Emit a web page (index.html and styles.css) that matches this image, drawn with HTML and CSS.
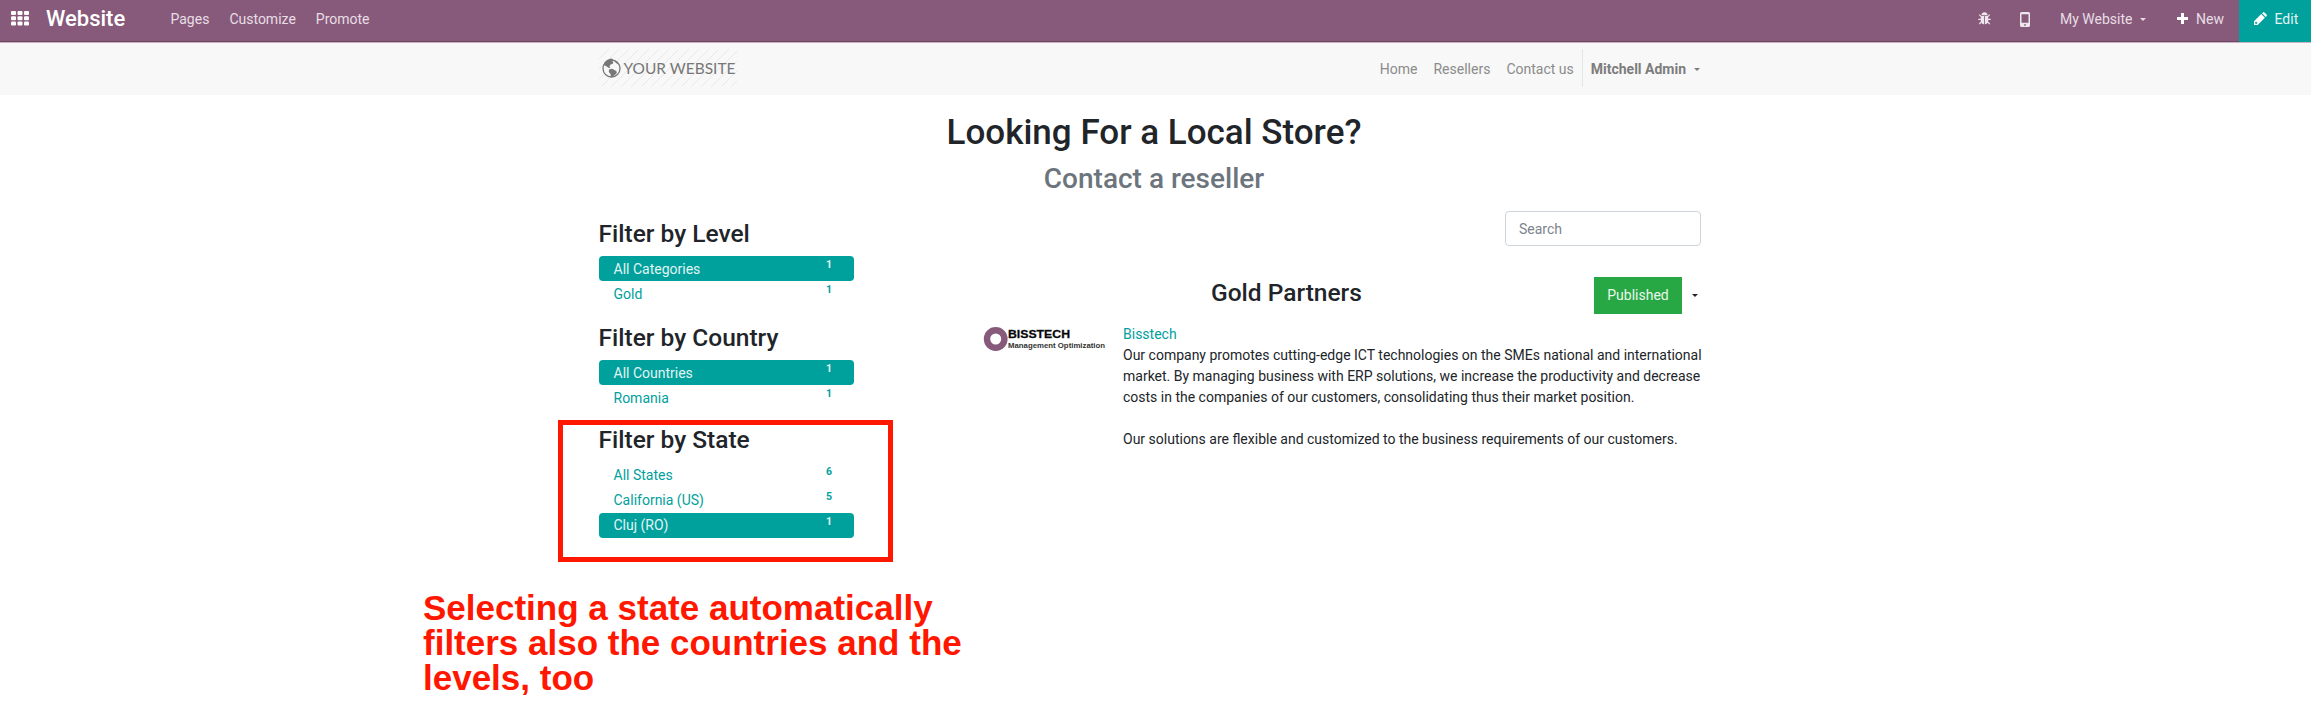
FILE: index.html
```html
<!DOCTYPE html>
<html lang="en">
<head>
<meta charset="utf-8">
<title>Resellers | My Website</title>
<link rel="stylesheet" href="styles.css">
</head>
<body>
<nav class="topbar">
  <svg class="apps" width="18" height="15" viewBox="0 0 18 15" fill="#fff"><rect x="0" y="0" width="5" height="4" rx="1"/><rect x="6.500" y="0" width="5" height="4" rx="1"/><rect x="13" y="0" width="5" height="4" rx="1"/><rect x="0" y="5.300" width="5" height="4" rx="1"/><rect x="6.500" y="5.300" width="5" height="4" rx="1"/><rect x="13" y="5.300" width="5" height="4" rx="1"/><rect x="0" y="10.600" width="5" height="4" rx="1"/><rect x="6.500" y="10.600" width="5" height="4" rx="1"/><rect x="13" y="10.600" width="5" height="4" rx="1"/></svg>
  <span class="brand">Website</span>
  <div class="menu"><a>Pages</a><a>Customize</a><a>Promote</a></div>
  <div class="tools">
    <svg class="bug" width="13" height="13" viewBox="0 0 13 13"><path d="M3.500 3.200a3 3 0 0 1 6 0z" fill="#eee6ec"/><path d="M2.800 3.900h3.300v8.400C4 12.300 2.800 10.500 2.800 8.500zM6.900 3.900h3.300v4.600C10.200 10.500 9 12.300 6.900 12.300z" fill="#eee6ec"/><path d="M1.300 2.700l2 2M11.700 2.700l-2 2M.3 7.300h3M12.700 7.300h-3M1.300 12l2.200-2.300M11.700 12l-2.200-2.300" stroke="#eee6ec" stroke-width="1.200"/></svg>
    <svg class="mobile" width="10" height="15" viewBox="0 0 10 15"><path fill-rule="evenodd" fill="#eee6ec" d="M1.500 0h7A1.500 1.500 0 0 1 10 1.500v12A1.500 1.500 0 0 1 8.500 15h-7A1.500 1.500 0 0 1 0 13.500v-12A1.500 1.500 0 0 1 1.500 0zM1.500 2.200v8.600h7V2.200zM5 12a.9.9 0 1 0 0 1.800.9.900 0 0 0 0-1.800z"/></svg>
    <a class="site">My Website<i class="caret"></i></a>
    <a class="new"><svg width="11" height="11" viewBox="0 0 11 11"><path d="M4 0h3v4h4v3H7v4H4V7H0V4h4z" fill="#fff"/></svg>New</a>
    <a class="edit"><svg width="13" height="13" viewBox="0 0 13 13"><path fill="#fff" fill-rule="evenodd" d="M0 13v-3.700L7.200 2.100l3.700 3.700L3.700 13zM1.200 10.200v1.600h1.600l.8-.8L2 9.400z"/><path fill="#fff" d="M8 1.300L9 .4q.7-.6 1.400 0l2.200 2.200q.6.700 0 1.400l-.9 1z"/></svg>Edit</a>
  </div>
</nav>
<header class="site-header">
  <svg class="logo" width="138" height="38" viewBox="0 0 138 38">
    <defs><pattern id="hatch" width="10" height="10" patternUnits="userSpaceOnUse"><path d="M-1 11L11-1M-1 1L1-1M9 11l2-2" stroke="#e9e9e9" stroke-width="1"/></pattern></defs>
    <rect width="138" height="38" fill="url(#hatch)"/>
    <circle cx="12.500" cy="19.500" r="8.500" fill="#f8f8f8" stroke="#777" stroke-width="1.300"/>
    <path fill="#777" d="M5 14l3-3 4-1.500 2 .5-1 2 1.500 1-1 2-2 .5-1 2 1 1.500-2-.2L7 17l-1.500-.5zM10 20.500l3-.7 3.500 1.700 1.500 1.500-1 2-2 1.500-1.500 1.500h-1.500l-.5-3-1.700-2zM15 11l3 2 1.500 2-1.800-.5L16 13z"/>
    <text x="24.500" y="25" textLength="112" lengthAdjust="spacingAndGlyphs" class="logo-text">YOUR WEBSITE</text>
  </svg>
  <div class="links"><a>Home</a><a>Resellers</a><a>Contact us</a><a class="user">Mitchell Admin<i class="caret"></i></a></div>
</header>
<main class="page">
  <h1>Looking For a Local Store?</h1>
  <h2>Contact a reseller</h2>
  <div class="columns">
    <aside class="filters">
      <h3>Filter by Level</h3>
      <ul><li class="active">All Categories<b>1</b></li><li>Gold<b>1</b></li></ul>
      <h3>Filter by Country</h3>
      <ul><li class="active">All Countries<b>1</b></li><li>Romania<b>1</b></li></ul>
      <section class="state">
        <h3>Filter by State</h3>
        <ul><li>All States<b>6</b></li><li>California (US)<b>5</b></li><li class="active">Cluj (RO)<b>1</b></li></ul>
        <div class="highlight"></div>
      </section>
    </aside>
    <section class="results">
      <input class="search" placeholder="Search">
      <div class="level"><h3>Gold Partners</h3><button>Published</button><i class="caret"></i></div>
      <article class="partner">
        <svg class="partner-logo" width="123" height="28" viewBox="0 0 123 28"><circle cx="11.700" cy="14" r="8.700" fill="none" stroke="#875a7b" stroke-width="6.400"/><text x="24" y="13" textLength="62" lengthAdjust="spacingAndGlyphs" class="co-name">BISSTECH</text><text x="24" y="22.500" textLength="97" lengthAdjust="spacingAndGlyphs" class="co-tag">Management Optimization</text></svg>
        <div class="about"><a>Bisstech</a><p>Our company promotes cutting-edge ICT technologies on the SMEs national and international<br>market. By managing business with ERP solutions, we increase the productivity and decrease<br>costs in the companies of our customers, consolidating thus their market position.<br><br>Our solutions are flexible and customized to the business requirements of our customers.</p></div>
      </article>
    </section>
  </div>
  <p class="note">Selecting a state automatically<br>filters also the countries and the<br>levels, too</p>
</main>
</body>
</html>
```
FILE: styles.css
```css
* { box-sizing: border-box; }
body { margin: 0; background: #fff; color: #212529; font: 14px/21px Roboto, sans-serif; }
h1, h2, h3, p, ul { margin: 0; padding: 0; }
h1, h2, h3 { font-weight: 500; }
.caret { display: inline-block; border: 3.500px solid transparent; border-top: 3.500px solid; border-bottom: 0; }

.topbar { display: flex; height: 43px; padding-left: 11px; background: #875a7b; border-bottom: 1px solid #c9b3c3; box-shadow: inset 0 -1px #6c4862; color: #e7dee5; line-height: 38px; }
.apps { margin-top: 11px; }
.brand { width: 124.500px; margin-left: 17px; color: #fff; font-size: 22px; font-weight: 500; line-height: 37px; }
.menu { display: flex; gap: 20px; }
.tools { display: flex; margin-left: auto; }
.bug { margin: 12px 29px 0 0; }
.mobile { margin: 12px 30px 0 0; }
.site { width: 117px; }
.site .caret { margin: 0 0 3px 8px; }
.new { display: flex; width: 61.500px; gap: 8px; }
.new svg { margin-top: 13px; }
.edit { display: flex; gap: 8px; width: 72.500px; height: 42px; padding-left: 15px; background: #00a09d; color: #e0f4f3; }
.edit svg { margin-top: 12px; }

.site-header { display: flex; justify-content: space-between; height: 52px; padding: 6px 611px 0 599px; background: #f8f8f8; }
.logo-text { font: 15px Lato, sans-serif; fill: #777; }
.links { display: flex; gap: 16px; color: #8b8b8b; line-height: 40px; }
.user { height: 38px; margin-left: -8px; padding-left: 8px; border-left: 1px solid #e1e9e7; color: #7d7d7d; font-weight: 700; }
.user .caret { margin: 0 0 3px 8px; }

.page { padding: 17px 0 0 599px; }
h1 { width: 1110px; font-size: 35px; line-height: 42px; text-align: center; }
h2 { width: 1110px; margin-top: 8px; color: #6c757d; font-size: 28px; line-height: 34px; text-align: center; }
h3 { font-size: 24.500px; line-height: 29px; }

.columns { display: flex; width: 1103px; height: 383px; padding-top: 15px; justify-content: space-between; }
.filters { width: 255px; padding-top: 8px; }
.filters h3 { margin-left: -.5px; margin-bottom: 8px; }
.filters ul { margin-bottom: 17px; list-style: none; }
.filters li { display: flex; justify-content: space-between; height: 25px; padding: 3px 22px 0 14.500px; border-radius: 4px; color: #00a09d; }
.filters b { margin-top: -1px; font-size: 10.500px; line-height: 13px; }
.filters .active { background: #00a09d; color: #e0f4f3; }
.state { position: relative; margin-top: -2px; }
.state ul { padding-top: 1px; }
.state li { padding-top: 2px; }
.state b { margin-top: 0; }
.highlight { position: absolute; left: -41px; top: -5px; width: 335px; height: 142px; border: 5px solid #ff1700; }

.results { width: 718px; }
.search { display: block; width: 196px; height: 35px; margin: 0 1px 0 auto; padding: 0 13px; border: 1px solid #ced4da; border-radius: 4px; font: inherit; }
.search::placeholder { color: #7b848c; }
.level { display: flex; align-items: flex-start; margin-top: 31px; }
.level h3 { width: 383px; margin-left: 227px; line-height: 31px; white-space: nowrap; }
.level button { width: 88px; height: 37px; padding: 0; border: 0; background: #28a745; color: #e8f7eb; font: inherit; }
.level .caret { margin: 17px 0 0 10px; }
.partner { display: flex; margin-top: 10px; }
.partner-logo { margin-top: 1px; overflow: visible; }
.about { margin-left: 16px; white-space: nowrap; }
.about a { color: #00a09d; }
.co-name { font: bold 11.500px "Liberation Sans", sans-serif; stroke: #212529; stroke-width: .3px; }
.co-tag { font: bold 8px "Liberation Sans", sans-serif; fill: #333; }

.note { margin: 11px 0 0 -176px; color: #ff1700; font: bold 35px/35px "Liberation Sans", sans-serif; white-space: nowrap; }
```
